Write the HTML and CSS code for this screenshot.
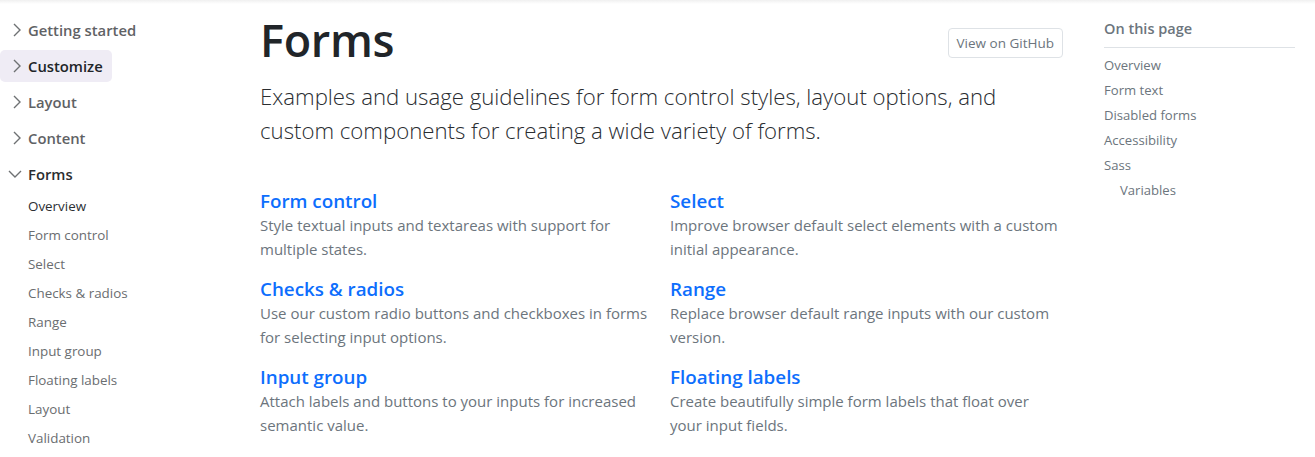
FILE: index.html
```html
<!DOCTYPE html>
<html lang="en">
<head>
<meta charset="utf-8">
<title>Forms</title>
<link rel="stylesheet" href="styles.css">
</head>
<body>
<div class="topshadow"></div>
<div class="layout">
  <nav class="sidebar">
    <ul class="links">
      <li><a class="group"><svg class="chev" viewBox="0 0 10 16"><path d="M2 2l6 6-6 6"/></svg>Getting started</a></li>
      <li><a class="group active"><svg class="chev" viewBox="0 0 10 16"><path d="M2 2l6 6-6 6"/></svg>Customize</a></li>
      <li><a class="group"><svg class="chev" viewBox="0 0 10 16"><path d="M2 2l6 6-6 6"/></svg>Layout</a></li>
      <li><a class="group"><svg class="chev" viewBox="0 0 10 16"><path d="M2 2l6 6-6 6"/></svg>Content</a></li>
      <li><a class="group open"><svg class="chev down" viewBox="0 0 14 10"><path d="M1 2l6 6 6-6"/></svg>Forms</a>
        <ul class="sub">
          <li><a class="current">Overview</a></li>
          <li><a>Form control</a></li>
          <li><a>Select</a></li>
          <li><a>Checks &amp; radios</a></li>
          <li><a>Range</a></li>
          <li><a>Input group</a></li>
          <li><a>Floating labels</a></li>
          <li><a>Layout</a></li>
          <li><a>Validation</a></li>
        </ul>
      </li>
    </ul>
  </nav>
  <main class="main">
    <div class="intro">
      <h1 class="title">Forms</h1>
      <a class="btn-gh">View on GitHub</a>
    </div>
    <p class="lead">Examples and usage guidelines for form control styles, layout options, and custom components for creating a wide variety of forms.</p>
    <div class="cards">
      <div class="card"><h2><a>Form control</a></h2><p>Style textual inputs and textareas with support for multiple states.</p></div>
      <div class="card"><h2><a>Select</a></h2><p>Improve browser default select elements with a custom initial appearance.</p></div>
      <div class="card"><h2><a>Checks &amp; radios</a></h2><p>Use our custom radio buttons and checkboxes in forms for selecting input options.</p></div>
      <div class="card"><h2><a>Range</a></h2><p>Replace browser default range inputs with our custom version.</p></div>
      <div class="card"><h2><a>Input group</a></h2><p>Attach labels and buttons to your inputs for increased semantic value.</p></div>
      <div class="card"><h2><a>Floating labels</a></h2><p>Create beautifully simple form labels that float over your input fields.</p></div>
    </div>
  </main>
  <aside class="toc">
    <strong class="toc-title">On this page</strong>
    <hr class="toc-rule">
    <ul class="toc-list">
      <li><a>Overview</a></li>
      <li><a>Form text</a></li>
      <li><a>Disabled forms</a></li>
      <li><a>Accessibility</a></li>
      <li><a>Sass</a>
        <ul class="toc-sub"><li><a>Variables</a></li></ul>
      </li>
    </ul>
  </aside>
</div>
</body>
</html>
```
FILE: styles.css
```css
* { box-sizing: border-box; }
html, body { margin: 0; padding: 0; }
body {
  font-family: "Open Sans", "Noto Sans", sans-serif;
  color: #212529;
  background: #fff;
  height: 457px;
  overflow: hidden;
}
ul { list-style: none; margin: 0; padding: 0; }
a { text-decoration: none; cursor: pointer; }

.topshadow {
  height: 4px;
  background: linear-gradient(#f0f0f0, #fff);
}

.layout {
  display: flex;
}

/* Sidebar */
.sidebar {
  width: 260px;
  flex: none;
  padding-top: 10px;
}
.links > li { margin-bottom: 4px; }
.group {
  display: inline-flex;
  align-items: center;
  gap: 6px;
  height: 32px;
  padding: 0 9px 0 12px;
  border-radius: 5px;
  font-size: 14.8px;
  font-weight: 550;
  color: #5f6265;
}
.group.active {
  background: #efecf5;
  color: #212428;
}
.group.open { color: #2b2e31; padding-left: 8px; }
.chev {
  width: 10px;
  height: 16px;
  fill: none;
  stroke: #6e7173;
  stroke-width: 1.4;
}
.chev.down { width: 14px; height: 10px; }
.sub { padding: 1px 0 0 28px; }
.sub li { height: 29px; display: flex; align-items: center; }
.sub a {
  font-size: 13.4px;
  color: #6a6d70;
}
.sub a.current { color: #2c2f33; font-weight: 500; }

/* Main */
.main {
  width: 804px;
  flex: none;
}
.intro {
  display: flex;
  justify-content: space-between;
  align-items: flex-start;
}
.title {
  margin: 6px 0 0;
  font-size: 45px;
  font-weight: 600;
  line-height: 60px;
  letter-spacing: -0.3px;
}
.lead {
  margin: 10px 0 0;
  font-size: 22.2px;
  font-weight: 300;
  line-height: 34px;
  color: #2a2d31;
}
.btn-gh {
  flex: none;
  margin-top: 24px;
  margin-right: 1px;
  padding: 5px 8px;
  border: 1px solid #dee2e6;
  border-radius: 4px;
  font-size: 13.5px;
  line-height: 18px;
  color: #6c757d;
}

.cards {
  margin-top: 41px;
  display: grid;
  grid-template-columns: 410px 394px;
  row-gap: 16px;
}
.card h2 {
  margin: 0;
  font-size: 18.8px;
  font-weight: 600;
  line-height: 24px;
}
.card h2 a { color: #0d6efd; }
.card p {
  margin: 0;
  font-size: 15px;
  line-height: 24px;
  color: #6c757d;
}

/* TOC */
.toc {
  margin-left: 40px;
  width: 191px;
  flex: none;
  padding-top: 14px;
}
.toc-title {
  display: block;
  font-size: 14.5px;
  font-weight: 600;
  color: #6c757d;
  line-height: 22px;
}
.toc-rule {
  margin: 7px 0 5px;
  border: 0;
  border-top: 1px solid #dee2e6;
}
.toc-list li a {
  display: block;
  font-size: 13.1px;
  line-height: 25px;
  color: #6c757d;
}
.toc-sub { padding-left: 16px; }
```
